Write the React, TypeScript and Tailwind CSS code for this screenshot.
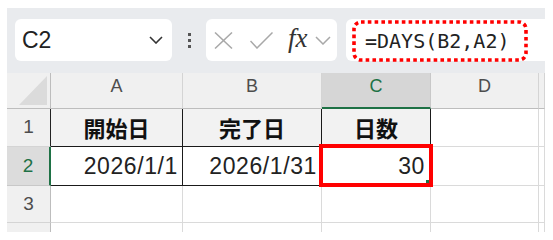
import React from "react";

function ColHeader({ label, active }: { label: string; active?: boolean }) {
  return (
    <div
      className={
        "flex items-center justify-center pb-[8px] text-[18px] border-r " +
        (active
          ? "bg-[#d6d6d6] text-[#1e7145] border-b-2 border-b-[#1e7145] border-r-[#c8c8c8]"
          : "bg-[#f0f0f0] text-[#4d4d4d] border-b border-b-[#bdbdbd] border-r-[#d4d4d4]")
      }
      style={{ fontFamily: '"Liberation Sans", Arial, sans-serif' }}
    >
      {label}
    </div>
  );
}

function RowHeader({ label, active, black }: { label?: string; active?: boolean; black?: boolean }) {
  return (
    <div
      className={
        "flex items-center justify-center text-[19px] border-b " +
        (active
          ? "bg-[#dcdcdc] text-[#1e7145] border-r-2 border-r-[#1e7145] border-b-[#c8c8c8]"
          : "bg-[#f0f0f0] text-[#4d4d4d] border-r border-b-[#d4d4d4] " +
            (black ? "border-r-[#222]" : "border-r-[#bdbdbd]"))
      }
      style={{ fontFamily: '"Liberation Sans", Arial, sans-serif' }}
    >
      {label}
    </div>
  );
}

function Cell({ className = "" }: { className?: string }) {
  return <div className={"bg-white border-r border-b border-[#dadada] " + className} />;
}

export default function App() {
  const sans = { fontFamily: '"Liberation Sans", Arial, sans-serif' };
  const jp = { fontFamily: '"Noto Sans CJK JP", "Noto Sans", sans-serif' };
  return (
    <div className="w-[553px] h-[240px] bg-white pt-[8px] pl-[7px]">
      <div className="w-[538px] h-[224px] bg-[#e9ebee] flex flex-col">
        {/* toolbar */}
        <div className="flex items-center h-[42px] mt-[11px] ml-[8px]">
          <div className="w-[157px] h-[42px] bg-white rounded-[6px] flex items-center justify-between pl-[7px] pr-[9px]">
            <span className="text-[23px] text-[#222] leading-none" style={sans}>
              C2
            </span>
            <svg width="14" height="8" viewBox="0 0 14 8">
              <polyline points="1,1 7,7 13,1" fill="none" stroke="#333" strokeWidth="1.6" />
            </svg>
          </div>
          <div className="w-[34px] flex flex-col items-center gap-[3px]">
            <div className="w-[3px] h-[3px] bg-[#555]" />
            <div className="w-[3px] h-[3px] bg-[#555]" />
            <div className="w-[3px] h-[3px] bg-[#555]" />
          </div>
          <div className="w-[131px] h-[42px] bg-white rounded-[6px] flex items-center pl-[8px]">
            <svg width="19" height="17" viewBox="0 0 19 17">
              <line x1="1" y1="0.5" x2="18" y2="16.5" stroke="#a8a8a8" strokeWidth="1.5" />
              <line x1="18" y1="0.5" x2="1" y2="16.5" stroke="#a8a8a8" strokeWidth="1.5" />
            </svg>
            <svg width="23" height="17" viewBox="0 0 23 17" className="ml-[17px]">
              <polyline points="0.5,9 7,16 22.5,0.5" fill="none" stroke="#a8a8a8" strokeWidth="1.5" />
            </svg>
            <span
              className="ml-[15px] text-[27px] italic text-[#333] leading-none -mt-[3px]"
              style={{ fontFamily: '"Liberation Serif", "Times New Roman", serif' }}
            >
              fx
            </span>
            <svg width="16" height="9" viewBox="0 0 16 9" className="ml-[7px]">
              <polyline points="1,1 8,8 15,1" fill="none" stroke="#a8a8a8" strokeWidth="1.5" />
            </svg>
          </div>
          <div className="flex-1 ml-[9px] h-[42px] bg-white rounded-l-[6px] flex items-start">
            <div className="relative ml-[6px] mt-[1px] w-[176px] h-[42px] flex items-center pl-[13px]">
              <svg className="absolute inset-0" width="176" height="42" viewBox="0 0 176 42">
                <rect
                  x="2"
                  y="2"
                  width="172"
                  height="38"
                  rx="7"
                  fill="none"
                  stroke="#ff0000"
                  strokeWidth="3.6"
                  strokeDasharray="3.6 3.2"
                />
              </svg>
              <span
                className="relative text-[20px] text-[#222] leading-none"
                style={{ fontFamily: '"DejaVu Sans Mono", "Liberation Mono", monospace' }}
              >
                =DAYS(B2,A2)
              </span>
            </div>
          </div>
        </div>

        {/* grid */}
        <div className="mt-[12px] grid grid-cols-[44px_132px_139px_109px_108px_6px] grid-rows-[36px_38px_39px_37px_9px]">
          {/* header row */}
          <div className="bg-[#f0f0f0] border-r border-b border-r-[#bdbdbd] border-b-[#bdbdbd] flex items-end justify-end pr-[3px] pb-[3px]">
            <svg width="28" height="29" viewBox="0 0 28 29">
              <polygon points="28,0 28,29 0,29" fill="#dbdbdb" />
            </svg>
          </div>
          <ColHeader label="A" />
          <ColHeader label="B" />
          <ColHeader label="C" active />
          <ColHeader label="D" />
          <div className="bg-[#f0f0f0] border-r border-b border-r-[#d4d4d4] border-b-[#bdbdbd]" />

          {/* row 1 */}
          <RowHeader label="1" black />
          <div
            className="bg-[#f2f2f2] border-r border-b border-[#1a1a1a] flex items-center justify-center text-[22px] font-bold text-[#111]"
            style={jp}
          >
            開始日
          </div>
          <div
            className="bg-[#f2f2f2] border-r border-b border-[#1a1a1a] flex items-center justify-center text-[22px] font-bold text-[#111]"
            style={jp}
          >
            完了日
          </div>
          <div
            className="bg-[#f2f2f2] border-r border-b border-[#1a1a1a] flex items-center justify-center text-[22px] font-bold text-[#111]"
            style={jp}
          >
            日数
          </div>
          <Cell />
          <Cell />

          {/* row 2 */}
          <RowHeader label="2" active />
          <div
            className="bg-white border-r border-b border-[#1a1a1a] flex items-center justify-end pr-[4px] text-[23px] tracking-[0.6px] text-[#222]"
            style={sans}
          >
            2026/1/1
          </div>
          <div
            className="bg-white border-r border-b border-[#1a1a1a] flex items-center justify-end pr-[4px] text-[23px] tracking-[0.6px] text-[#222]"
            style={sans}
          >
            2026/1/31
          </div>
          <div
            className="relative bg-white border-r border-b border-[#1a1a1a] flex items-center justify-end pr-[5px] text-[23px] tracking-[0.6px] text-[#222]"
            style={sans}
          >
            30
            <div className="absolute -top-[3px] -left-[3px] -right-[3px] -bottom-[2px] border-[4px] border-[#ff0000]" />
            <div className="absolute right-[1px] bottom-[2px] w-[3px] h-[3px] bg-[#1e7145]" />
          </div>
          <Cell />
          <Cell />

          {/* row 3 */}
          <RowHeader label="3" />
          <Cell />
          <Cell />
          <Cell />
          <Cell />
          <Cell />

          {/* row 4 partial */}
          <div className="bg-[#f0f0f0] border-r border-r-[#bdbdbd]" />
          <div className="bg-white border-r border-[#dadada]" />
          <div className="bg-white border-r border-[#dadada]" />
          <div className="bg-white border-r border-[#dadada]" />
          <div className="bg-white border-r border-[#dadada]" />
          <div className="bg-white border-r border-[#dadada]" />
        </div>
      </div>
    </div>
  );
}
